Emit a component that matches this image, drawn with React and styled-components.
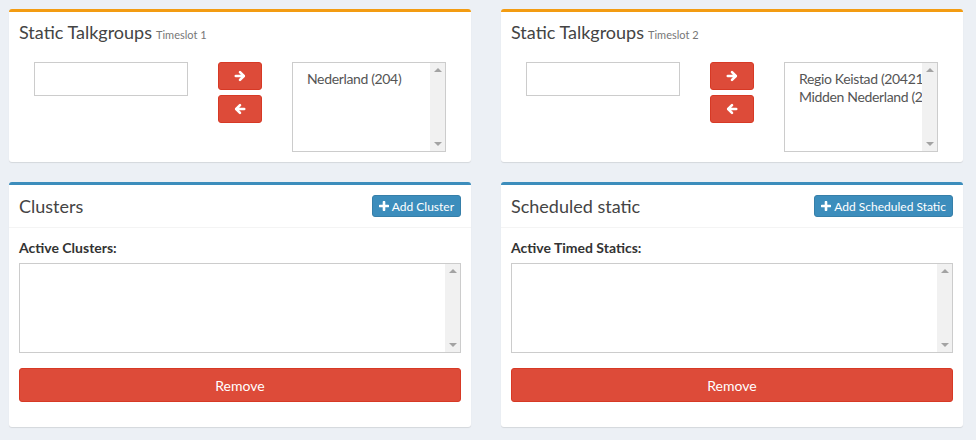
import React from 'react';
import styled, { createGlobalStyle } from 'styled-components';

const GlobalStyle = createGlobalStyle`
  html, body {
    margin: 0;
    padding: 0;
    background: #ecf0f5;
    min-height: 100vh;
  }
  body {
    font-family: Lato, "Open Sans", sans-serif;
    font-size: 14px;
    color: #333;
  }
  * {
    box-sizing: border-box;
  }
`;

const Page = styled.div`
  display: grid;
  grid-template-columns: 1fr 1fr;
  align-items: start;
  column-gap: 30px;
  row-gap: 20px;
  padding: 9px 13px 0 9px;
`;

const Box = styled.div`
  background: #fff;
  border-top: 3px solid ${p => p.color};
  border-radius: 3px;
  box-shadow: 0 1px 1px rgba(0, 0, 0, 0.1);
`;

const BoxHeader = styled.div`
  display: flex;
  align-items: center;
  justify-content: space-between;
  padding: 0 10px;
  height: ${p => (p.bordered ? '43px' : '40px')};
  border-bottom: ${p => (p.bordered ? '1px solid #f4f4f4' : 'none')};
`;

const BoxTitle = styled.h3`
  margin: 0;
  font-size: 18px;
  font-weight: 400;
  line-height: 20px;
  color: #444;
  white-space: nowrap;
`;

const Small = styled.small`
  font-size: 11px;
  line-height: 1;
  color: #777;
  margin-left: 4px;
`;

const BoxBody = styled.div`
  padding: 10px 10px ${p => p.bottom || 10}px;
`;

const Transfer = styled.div`
  display: flex;
  justify-content: center;
  align-items: flex-start;
  gap: 30px;
`;

const TextInput = styled.input`
  width: 154px;
  height: 34px;
  border: 1px solid #ccc;
  border-radius: 0;
  padding: 6px 12px;
  font: inherit;
  outline: none;
`;

const ArrowStack = styled.div`
  display: flex;
  flex-direction: column;
  gap: 5px;
`;

const ArrowButton = styled.button`
  width: 44px;
  height: 28px;
  display: flex;
  align-items: center;
  justify-content: center;
  background: #dd4b39;
  border: 1px solid #d73925;
  border-radius: 3px;
  color: #fff;
  padding: 0;
`;

const ListBox = styled.div`
  display: flex;
  width: ${p => p.width || '154px'};
  height: 90px;
  border: 1px solid #ccc;
  background: #fff;
`;

const ListItems = styled.div`
  flex: 1;
  min-width: 0;
  overflow: hidden;
  padding: 7px 0 0 14px;
  color: #555;
  font-size: 14px;
  line-height: 18px;
  letter-spacing: -0.35px;
  white-space: nowrap;
`;

const ScrollTrack = styled.div`
  width: 15px;
  flex: none;
  background: #f1f1f1;
  display: flex;
  flex-direction: column;
  justify-content: space-between;
  align-items: center;
  padding: 5px 0;
`;

const Tri = styled.span`
  width: 0;
  height: 0;
  border-left: 4px solid transparent;
  border-right: 4px solid transparent;
  ${p => (p.down ? 'border-top: 4px solid #a3a3a3;' : 'border-bottom: 4px solid #a3a3a3;')}
`;

const AddButton = styled.button`
  display: flex;
  align-items: center;
  gap: 3px;
  height: 22px;
  padding: 0 6px;
  background: #3c8dbc;
  border: 1px solid #367fa9;
  border-radius: 3px;
  color: #fff;
  font: inherit;
  font-size: 12px;
`;

const Label = styled.div`
  font-weight: 700;
  font-size: 14px;
  line-height: 20px;
  color: #333;
  margin-bottom: 5px;
`;

const RemoveButton = styled.button`
  display: block;
  width: 100%;
  height: 34px;
  margin-top: 15px;
  background: #dd4b39;
  border: 1px solid #d73925;
  border-radius: 3px;
  color: #fff;
  font: inherit;
  font-size: 14px;
`;

function Arrow({ left }) {
  return (
    <svg width="12" height="12" viewBox="0 0 12 12" style={left ? { transform: 'scaleX(-1)' } : undefined}>
      <g fill="none" stroke="currentColor" strokeWidth="2.6" strokeLinecap="round" strokeLinejoin="round">
        <path d="M1.8 6H9.6" />
        <path d="M6 2.2L9.8 6L6 9.8" />
      </g>
    </svg>
  );
}

function Plus() {
  return (
    <svg width="10" height="10" viewBox="0 0 10 10">
      <path d="M5 1V9M1 5H9" stroke="currentColor" strokeWidth="2.6" strokeLinecap="round" />
    </svg>
  );
}

function List({ items, width }) {
  return (
    <ListBox width={width}>
      <ListItems>
        {items.map(i => (
          <div key={i}>{i}</div>
        ))}
      </ListItems>
      <ScrollTrack>
        <Tri />
        <Tri down />
      </ScrollTrack>
    </ListBox>
  );
}

function TalkgroupBox({ slot, items }) {
  return (
    <Box color="#f39c12">
      <BoxHeader>
        <BoxTitle>
          Static Talkgroups<Small>Timeslot {slot}</Small>
        </BoxTitle>
      </BoxHeader>
      <BoxBody>
        <Transfer>
          <TextInput type="text" />
          <ArrowStack>
            <ArrowButton><Arrow /></ArrowButton>
            <ArrowButton><Arrow left /></ArrowButton>
          </ArrowStack>
          <List items={items} />
        </Transfer>
      </BoxBody>
    </Box>
  );
}

function ListPanel({ title, button, label }) {
  return (
    <Box color="#3c8dbc">
      <BoxHeader bordered>
        <BoxTitle>{title}</BoxTitle>
        <AddButton><Plus />{button}</AddButton>
      </BoxHeader>
      <BoxBody bottom={25}>
        <Label>{label}</Label>
        <List items={[]} width="100%" />
        <RemoveButton>Remove</RemoveButton>
      </BoxBody>
    </Box>
  );
}

export default function App() {
  return (
    <>
      <GlobalStyle />
      <Page>
        <TalkgroupBox slot={1} items={['Nederland (204)']} />
        <TalkgroupBox slot={2} items={['Regio Keistad (20421)', 'Midden Nederland (2041)']} />
        <ListPanel title="Clusters" button="Add Cluster" label="Active Clusters:" />
        <ListPanel title="Scheduled static" button="Add Scheduled Static" label="Active Timed Statics:" />
      </Page>
    </>
  );
}
